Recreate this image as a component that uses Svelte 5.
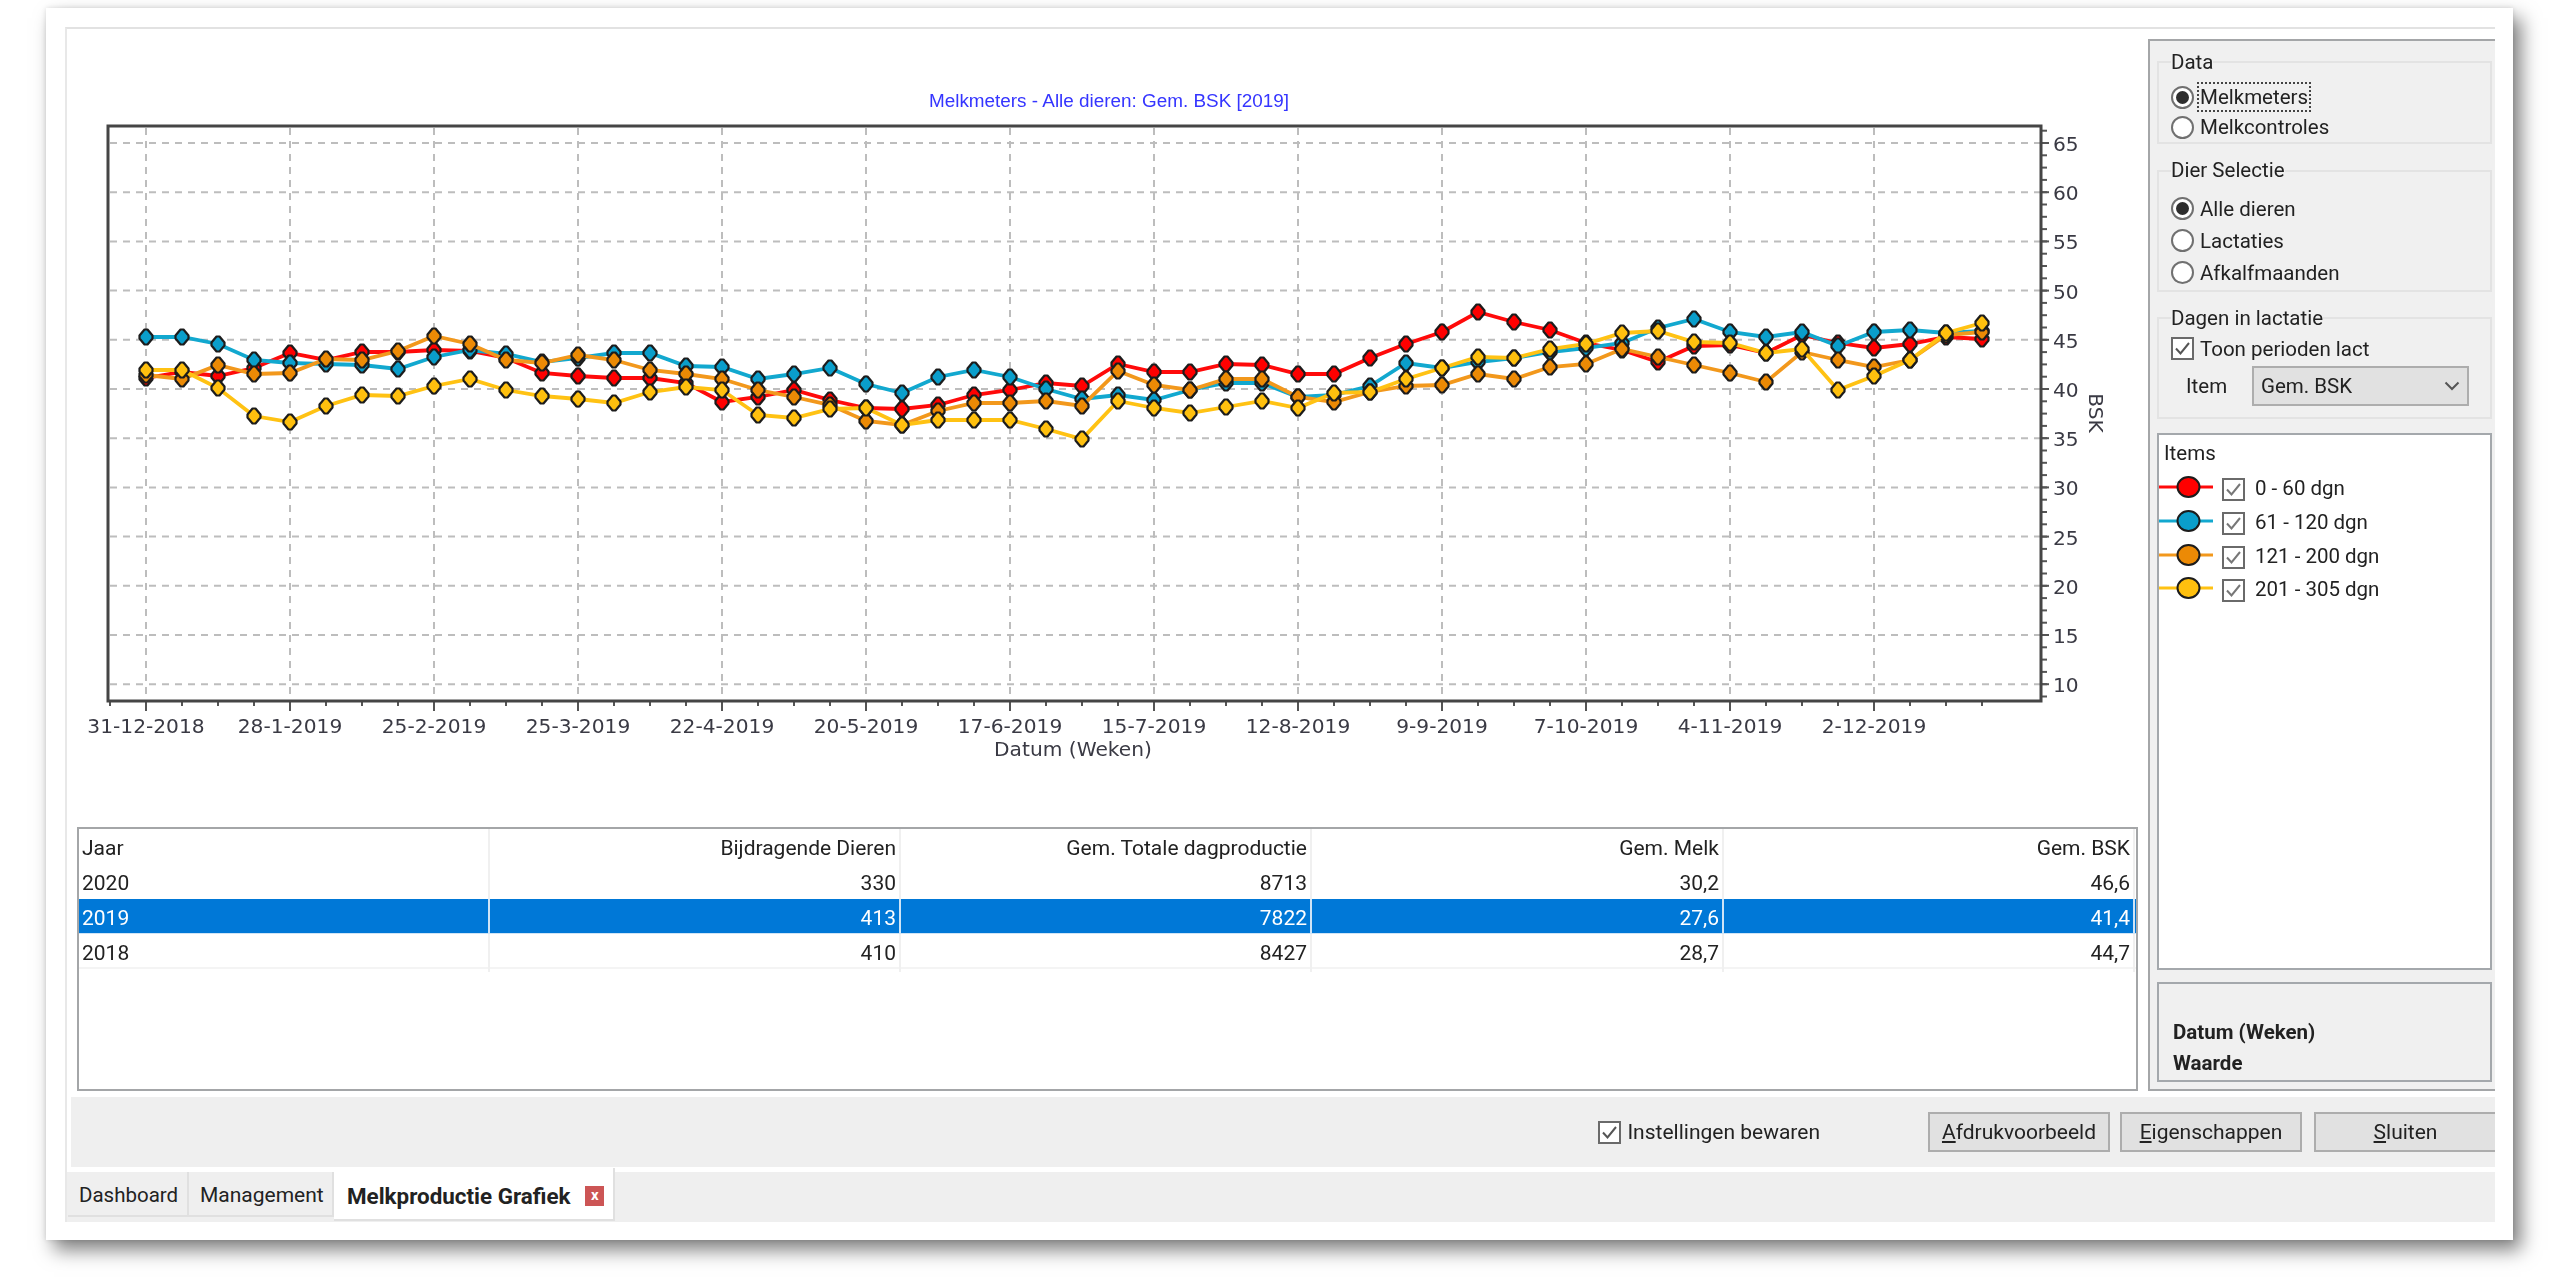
<script>
  const x0 = 146;
  const stepX = 36;
  const gridY = Array.from({ length: 12 }, (_, i) => 143 + i * 49.2);
  const yLabels = [65, 60, 55, 50, 45, 40, 35, 30, 25, 20, 15, 10];
  const xLabels = [
    "31-12-2018", "28-1-2019", "25-2-2019", "25-3-2019", "22-4-2019", "20-5-2019", "17-6-2019",
    "15-7-2019", "12-8-2019", "9-9-2019", "7-10-2019", "4-11-2019", "2-12-2019",
  ];

  // y positions per week, read off the chart
  const series = [
    {
      name: "0 - 60 dgn", line: "#ff0a0a", fill: "#ff0000",
      ys: [378, 372, 376, 368, 353, 360, 352, 352, 350, 351, 358, 373, 376, 378, 378, 383, 402, 397, 390, 400, 408, 409, 405, 395, 390, 383, 386, 364, 372, 372, 364, 365, 374, 374, 358, 344, 332, 312, 322, 330, 343, 350, 362, 346, 345, 353, 335, 343, 348, 344, 337, 339],
    },
    {
      name: "61 - 120 dgn", line: "#12a8cf", fill: "#0a9ecb",
      ys: [337, 337, 344, 360, 363, 364, 365, 369, 357, 350, 354, 362, 358, 353, 353, 366, 367, 379, 374, 368, 384, 393, 377, 370, 377, 389, 399, 395, 400, 390, 383, 383, 397, 395, 386, 363, 368, 362, 358, 352, 348, 343, 328, 319, 332, 337, 332, 346, 332, 330, 333, 331],
    },
    {
      name: "121 - 200 dgn", line: "#f2981c", fill: "#ec8a05",
      ys: [375, 379, 365, 374, 373, 359, 360, 351, 336, 344, 360, 363, 355, 360, 370, 374, 379, 390, 397, 405, 421, 425, 411, 403, 403, 401, 406, 371, 385, 390, 379, 379, 397, 402, 392, 386, 385, 374, 379, 367, 364, 349, 357, 365, 373, 382, 352, 360, 367, 360, 335, 332],
    },
    {
      name: "201 - 305 dgn", line: "#ffc213", fill: "#ffc00e",
      ys: [370, 370, 388, 416, 422, 406, 395, 396, 386, 379, 390, 396, 399, 403, 392, 387, 390, 415, 418, 409, 408, 425, 420, 420, 420, 429, 439, 401, 408, 413, 407, 401, 408, 393, 392, 379, 368, 357, 358, 349, 344, 333, 331, 342, 343, 353, 349, 390, 376, 360, 333, 323],
    },
  ];

  const columns = ["Jaar", "Bijdragende Dieren", "Gem. Totale dagproductie", "Gem. Melk", "Gem. BSK"];
  const rows = [
    { cells: ["2020", "330", "8713", "30,2", "46,6"] },
    { cells: ["2019", "413", "7822", "27,6", "41,4"], selected: true },
    { cells: ["2018", "410", "8427", "28,7", "44,7"] },
  ];

  const ptsOf = (ys) => ys.map((y, i) => `${x0 + i * stepX},${y}`).join(" ");
  // blunt diamond around a data point
  const marker = (x, y) =>
    [[-1.5, -7.5], [1.5, -7.5], [6.5, -1.5], [6.5, 1.5], [1.5, 7.5], [-1.5, 7.5], [-6.5, 1.5], [-6.5, -1.5]]
      .map(([dx, dy]) => `${x + dx},${y + dy}`)
      .join(" ");
  const bottomTicks = Array.from({ length: 53 }, (_, i) => 110 + i * stepX);
  const rightTicks = Array.from({ length: 47 }, (_, i) => 130.7 + i * 12.3);
</script>

{#snippet checkbox(color)}
  <svg class="check" width="23" height="23" viewBox="0 0 23 23">
    <rect x="1" y="1" width="21" height="21" fill="#fff" stroke="#6a6a6a" stroke-width="2" />
    <path d="M5 11.5 L9.5 16.5 L18 6" fill="none" stroke={color} stroke-width="2" />
  </svg>
{/snippet}

{#snippet radio(label, on, focused)}
  <div class="radio-row">
    <span class="radio" class:on></span>
    <span class:focus={focused}>{label}</span>
  </div>
{/snippet}

<div class="page">
<div class="window">
  <div class="inner">
    <div class="main">
      <div class="left">
        <svg class="chart" viewBox="65 29 2078 798" width="2078" height="798">
          <text class="title" x="1109" y="100">Melkmeters - Alle dieren: Gem. BSK [2019]</text>

          {#each gridY as y}
            <line class="grid" x1="110" x2="2040" y1={y} y2={y} />
          {/each}
          {#each xLabels as _, i}
            <line class="grid" x1={x0 + i * 144} x2={x0 + i * 144} y1="128" y2="700" />
          {/each}

          {#each bottomTicks as x, i}
            <line class="tick" x1={x} x2={x} y1="701" y2={(i - 1) % 4 === 0 ? 711 : 706} />
          {/each}
          {#each rightTicks as y}
            <line class="tick" x1="2041" x2="2047" y1={y} y2={y} />
          {/each}
          {#each gridY as y}
            <line class="tick" x1="2041" x2="2049" y1={y} y2={y} />
          {/each}

          {#each series as s}
            <polyline points={ptsOf(s.ys)} fill="none" stroke={s.line} stroke-width="3.8" />
            {#each s.ys as y, i}
              <polygon
                points={marker(x0 + i * stepX, y)}
                fill={s.fill}
                stroke="#1c1c1c"
                stroke-width="2.2"
                stroke-linejoin="round"
              />
            {/each}
          {/each}

          <rect class="frame" x="108" y="126" width="1933" height="575" />

          {#each yLabels as v, i}
            <text class="axis" x="2053" y={gridY[i] + 8}>{v}</text>
          {/each}
          {#each xLabels as label, i}
            <text class="axis mid" x={x0 + i * 144} y="733">{label}</text>
          {/each}
          <text class="axis mid" x="1073" y="756">Datum (Weken)</text>
          <text class="axis mid" transform="translate(2089 413) rotate(90)">BSK</text>
        </svg>

        <div class="table">
          <div class="tr head">
            {#each columns as c}<div class="td">{c}</div>{/each}
          </div>
          {#each rows as row}
            <div class="tr" class:selected={row.selected}>
              {#each row.cells as c}<div class="td">{c}</div>{/each}
            </div>
          {/each}
        </div>
      </div>

      <aside class="side">
        <fieldset class="group data">
          <legend>Data</legend>
          {@render radio("Melkmeters", true, true)}
          {@render radio("Melkcontroles", false, false)}
        </fieldset>

        <fieldset class="group dier">
          <legend>Dier Selectie</legend>
          {@render radio("Alle dieren", true, false)}
          {@render radio("Lactaties", false, false)}
          {@render radio("Afkalfmaanden", false, false)}
        </fieldset>

        <fieldset class="group dagen">
          <legend>Dagen in lactatie</legend>
          <div class="toon">
            {@render checkbox("#555")}
            <span>Toon perioden lact</span>
          </div>
          <div class="item-row">
            <span class="item-label">Item</span>
            <div class="select">
              <span>Gem. BSK</span>
              <svg width="16" height="10" viewBox="0 0 16 10">
                <path d="M1.5 1.5 L8 8 L14.5 1.5" fill="none" stroke="#555" stroke-width="2" />
              </svg>
            </div>
          </div>
        </fieldset>

        <div class="items">
          <div class="items-title">Items</div>
          {#each series as s}
            <div class="legend-row">
              <svg width="54" height="24" viewBox="0 0 54 24">
                <line x1="0" x2="54" y1="11" y2="11" stroke={s.line} stroke-width="3" />
                <ellipse cx="29.5" cy="11" rx="11" ry="10" fill={s.fill} stroke="#1c1c1c" stroke-width="2" />
              </svg>
              {@render checkbox("#777")}
              <span>{s.name}</span>
            </div>
          {/each}
        </div>

        <div class="info">
          <div>Datum (Weken)</div>
          <div>Waarde</div>
        </div>
      </aside>
    </div>

    <div class="toolbar">
      <label class="keep">
        {@render checkbox("#555")}
        <span>Instellingen bewaren</span>
      </label>
      <button class="btn"><u>A</u>fdrukvoorbeeld</button>
      <button class="btn"><u>E</u>igenschappen</button>
      <button class="btn close"><u>S</u>luiten</button>
    </div>

    <div class="tabs">
      <div class="tab dash">Dashboard</div>
      <div class="tab mgmt">Management</div>
      <div class="tab active">
        <span>Melkproductie Grafiek</span>
        <span class="x">x</span>
      </div>
    </div>
  </div>
</div>
</div>

<style>
  :global(body) {
    background: #fff;
  }

  .page {
    height: 1280px;
    padding: 8px 0 0 46px;
    box-sizing: border-box;
    overflow: hidden;
  }

  .window {
    box-sizing: border-box;
    width: 2467px;
    height: 1232px;
    padding: 19px 18px 18px 19px;
    background: #fff;
    box-shadow: 8px 10px 18px rgba(0, 0, 0, 0.5), 0 0 5px rgba(0, 0, 0, 0.12);
    font-family: Roboto, "Noto Sans", sans-serif;
    font-size: 20.5px;
    color: #222;
  }

  .inner {
    height: 100%;
    display: flex;
    flex-direction: column;
    border-top: 2px solid #e2e2e2;
    border-left: 2px solid #e8e8e8;
    box-sizing: border-box;
    filter: blur(0.55px);
  }

  .main {
    display: flex;
    height: 1062px;
  }

  .left {
    width: 2081px;
    flex: none;
  }

  .chart {
    display: block;
    margin-left: -2px;
  }

  .title {
    font-family: "Liberation Sans", Arial, sans-serif;
    font-size: 18.9px;
    fill: #3535ff;
    text-anchor: middle;
    dominant-baseline: central;
  }

  .grid {
    stroke: #bdbdbd;
    stroke-width: 2;
    stroke-dasharray: 7 6;
  }

  .tick {
    stroke: #555;
    stroke-width: 2;
  }

  .frame {
    fill: none;
    stroke: #454545;
    stroke-width: 3;
  }

  .axis {
    font-family: "DejaVu Sans", sans-serif;
    font-size: 20.2px;
    fill: #3a3a44;
  }

  .mid {
    text-anchor: middle;
  }

  .table {
    box-sizing: border-box;
    width: 2061px;
    height: 264px;
    margin-left: 10px;
    border: 2px solid #a4a6a8;
    background: #fff;
    font-size: 21px;
  }

  .tr {
    display: grid;
    grid-template-columns: 411px 411px 411px 412px 411px;
    height: 35px;
    line-height: 38px;
    box-sizing: border-box;
  }

  .tr:last-child {
    border-bottom: 2px solid #f4f4f4;
  }

  .td {
    padding: 0 3px;
    text-align: right;
    border-right: 2px solid #f0f0f0;
  }

  .td:first-child {
    text-align: left;
  }

  .tr.selected {
    background: #0078d7;
    color: #fff;
    border-bottom: 1px solid #cfe4f6;
  }

  .tr.selected .td {
    border-right-color: #cfe4f6;
  }

  .side {
    box-sizing: border-box;
    flex: 1;
    margin-top: 10px;
    height: 1052px;
    padding: 7.5px 3px 0 7px;
    background: #f0f0f0;
    border-left: 2px solid #a4a6a8;
    border-top: 2px solid #a4a6a8;
    border-bottom: 2px solid #a4a6a8;
  }

  .group {
    margin: 0 0 13px;
    padding: 0 12px;
    border: 2px solid #e3e3e3;
    min-width: 0;
  }

  .group legend {
    padding: 0;
    line-height: 27px;
  }

  .group.data {
    padding-top: 6.5px;
  }

  .group.dier {
    padding-top: 8.5px;
    padding-bottom: 1px;
  }

  .group.dagen {
    padding-top: 4px;
    padding-bottom: 11px;
    margin-bottom: 14px;
  }

  .radio-row {
    display: flex;
    align-items: center;
    gap: 6px;
    height: 30px;
  }

  .dier .radio-row {
    height: 32px;
  }

  .radio {
    box-sizing: border-box;
    width: 23px;
    height: 23px;
    border: 2px solid #707070;
    border-radius: 50%;
    background: #fff;
    display: flex;
    align-items: center;
    justify-content: center;
  }

  .radio.on::after {
    content: "";
    width: 13px;
    height: 13px;
    border-radius: 50%;
    background: #2e2e2e;
  }

  .focus {
    outline: 2px dotted #444;
    outline-offset: 1px;
    line-height: 24px;
  }

  .check {
    display: block;
    flex: none;
  }

  .toon {
    display: flex;
    align-items: center;
    gap: 6px;
    height: 26px;
  }

  .item-row {
    display: flex;
    align-items: center;
    margin-top: 4px;
    padding-left: 15px;
  }

  .item-label {
    width: 66px;
  }

  .select {
    box-sizing: border-box;
    width: 217px;
    height: 40px;
    display: flex;
    align-items: center;
    justify-content: space-between;
    padding: 0 7px;
    background: #e1e1e1;
    border: 2px solid #adadad;
  }

  .items {
    box-sizing: border-box;
    height: 537px;
    padding-top: 5px;
    background: #fff;
    border: 2px solid #a4a8ac;
  }

  .items-title {
    padding-left: 5px;
    line-height: 27px;
    margin-bottom: 5px;
  }

  .legend-row {
    display: flex;
    align-items: center;
    height: 33.7px;
  }

  .legend-row .check {
    margin: 3px 10px 0 9px;
  }

  .info {
    box-sizing: border-box;
    height: 100px;
    margin-top: 12px;
    padding: 0 14px 1px;
    display: flex;
    flex-direction: column;
    justify-content: flex-end;
    font-weight: 700;
    line-height: 31px;
    border: 2px solid #a4a8ac;
  }

  .toolbar {
    height: 70px;
    margin: 6px 0 0 4px;
    display: flex;
    align-items: center;
    justify-content: flex-end;
    background: #efefef;
  }

  .keep {
    display: flex;
    align-items: center;
    gap: 6px;
    margin-right: 108px;
    font-size: 21px;
  }

  .btn {
    box-sizing: border-box;
    width: 182px;
    height: 40px;
    margin-right: 10px;
    padding: 0;
    font: inherit;
    font-size: 21px;
    color: inherit;
    background: #e1e1e1;
    border: 2px solid #adadad;
  }

  .btn.close {
    width: 181px;
    margin: 0 0 0 2px;
    border-right: none;
  }

  .tabs {
    position: relative;
    height: 50px;
    margin-top: 5px;
    display: flex;
    align-items: flex-start;
    padding-left: 1px;
    background: #efefef;
  }

  .tab {
    box-sizing: border-box;
    height: 45px;
    line-height: 46px;
    padding-left: 11px;
    border-right: 2px solid #e0e0e0;
    border-bottom: 2px solid #e0e0e0;
  }

  .dash {
    width: 121px;
  }

  .mgmt {
    width: 145px;
    font-size: 21px;
  }

  .active {
    width: 281px;
    height: 53px;
    margin-top: -4px;
    padding: 4px 0 0 13px;
    display: flex;
    align-items: center;
    gap: 15px;
    background: #fff;
    font-size: 22.4px;
    font-weight: 700;
  }

  .x {
    width: 19px;
    height: 20px;
    background: #cc5555;
    color: #fff;
    font-size: 15px;
    line-height: 19px;
    text-align: center;
  }
</style>
